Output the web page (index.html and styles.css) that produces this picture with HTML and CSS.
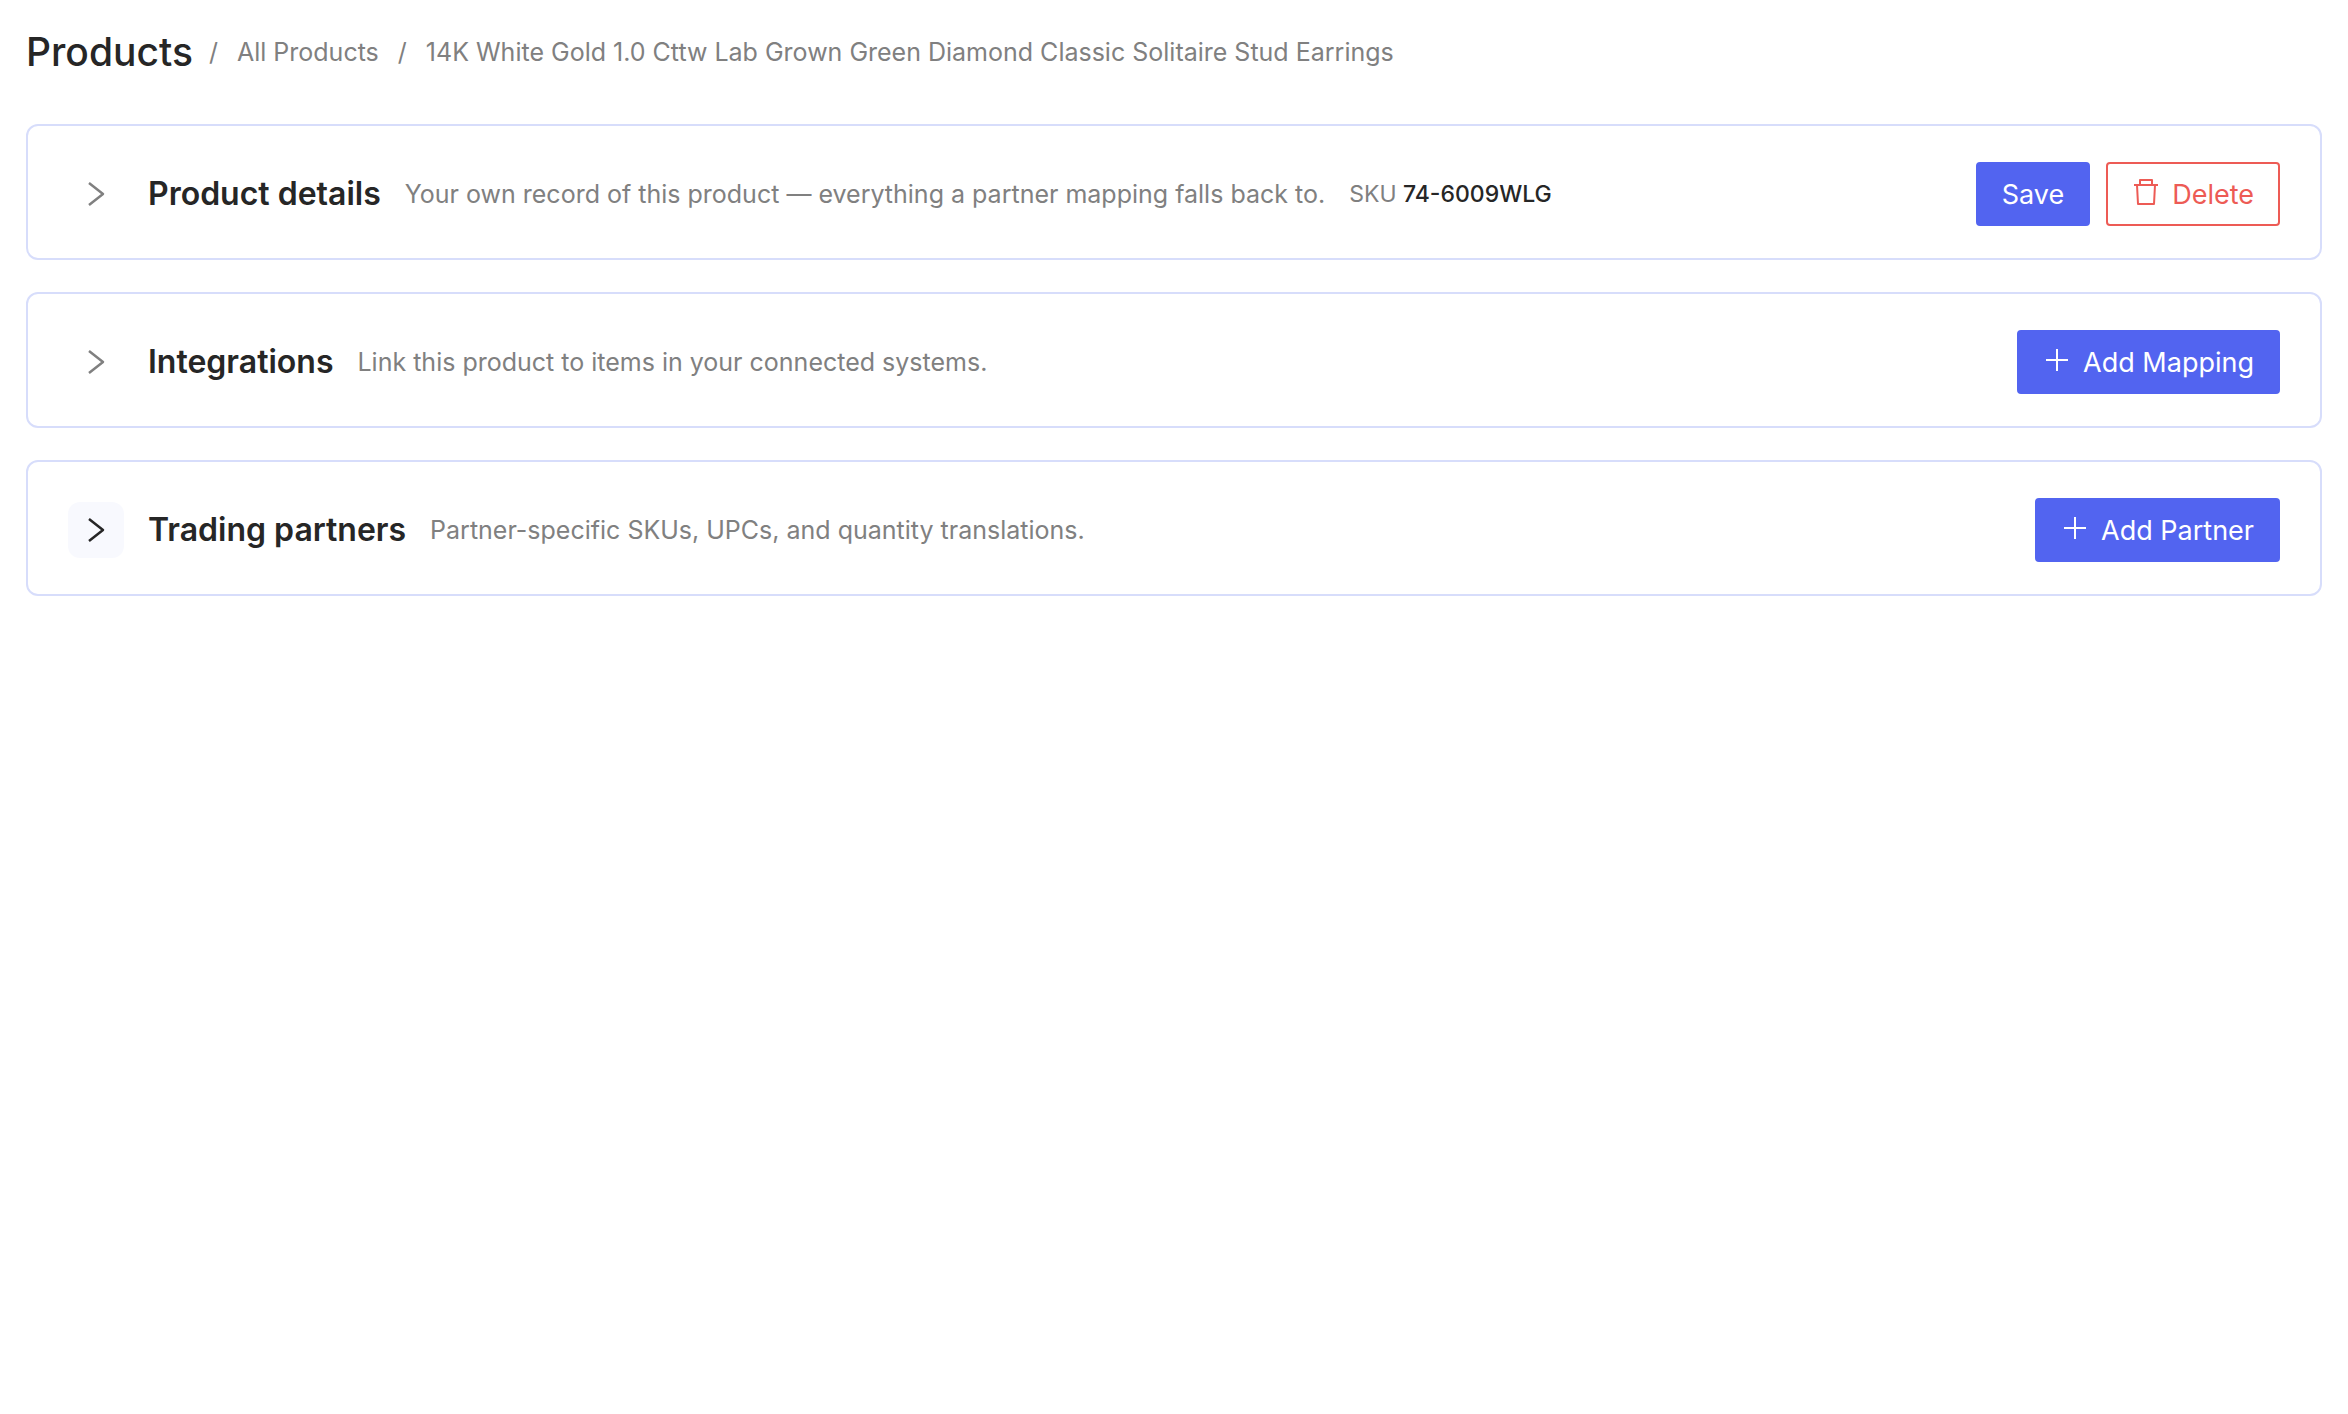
FILE: index.html
```
<!DOCTYPE html>
<html lang="en">
<head>
    <meta charset="UTF-8">
    <meta name="viewport" content="width=device-width, initial-scale=1.0">
    <title>Products</title>
    <link rel="stylesheet" href="styles.css">
</head>
<body>
    <header class="page-header">
        <h1>Products</h1>
        <nav class="breadcrumb" aria-label="Breadcrumb">
            <span class="separator">/</span>
            <a href="#">All Products</a>
            <span class="separator">/</span>
            <span>14K White Gold 1.0 Cttw Lab Grown Green Diamond Classic Solitaire Stud Earrings</span>
        </nav>
    </header>

    <main>
        <section class="card">
            <button type="button" class="toggle" aria-label="Expand product details">
                <svg viewBox="0 0 28 28"><path d="M7 3 L21 14 L7 25"/></svg>
            </button>
            <h2>Product details</h2>
            <p class="description">Your own record of this product — everything a partner mapping falls back to.</p>
            <p class="sku">SKU <strong>74-6009WLG</strong></p>
            <div class="actions">
                <button type="button" class="btn btn-primary">Save</button>
                <button type="button" class="btn btn-danger">
                    <svg viewBox="0 0 28 28"><path d="M2 7 H26 M5 7 L6 26 H22 L23 7 M8 7 V2 H20 V7"/></svg>
                    Delete
                </button>
            </div>
        </section>

        <section class="card">
            <button type="button" class="toggle" aria-label="Expand integrations">
                <svg viewBox="0 0 28 28"><path d="M7 3 L21 14 L7 25"/></svg>
            </button>
            <h2>Integrations</h2>
            <p class="description">Link this product to items in your connected systems.</p>
            <div class="actions">
                <button type="button" class="btn btn-primary">
                    <svg viewBox="0 0 28 28"><path d="M14 3 V25 M3 14 H25"/></svg>
                    Add Mapping
                </button>
            </div>
        </section>

        <section class="card">
            <button type="button" class="toggle active" aria-label="Expand trading partners">
                <svg viewBox="0 0 28 28"><path d="M7 3 L21 14 L7 25"/></svg>
            </button>
            <h2>Trading partners</h2>
            <p class="description">Partner-specific SKUs, UPCs, and quantity translations.</p>
            <div class="actions">
                <button type="button" class="btn btn-primary">
                    <svg viewBox="0 0 28 28"><path d="M14 3 V25 M3 14 H25"/></svg>
                    Add Partner
                </button>
            </div>
        </section>
    </main>
</body>
</html>
```
FILE: styles.css
```
* {
    box-sizing: border-box;
}
body {
    font-family: Inter, "Liberation Sans", sans-serif;
    margin: 0;
    padding: 24px 26px;
    color: #262626;
    background-color: #fff;
}
h1, h2, p {
    margin: 0;
}
.page-header {
    display: flex;
    align-items: center;
    gap: 16px;
    min-height: 56px;
    margin-bottom: 44px;
}
h1 {
    font-size: 39px;
    font-weight: 500;
    line-height: 56px;
}
.breadcrumb {
    display: flex;
    align-items: center;
    gap: 19px;
    font-size: 25px;
    line-height: 40px;
    color: #808080;
}
.breadcrumb a {
    color: inherit;
    text-decoration: none;
}
main {
    display: flex;
    flex-direction: column;
    gap: 32px;
}
.card {
    display: flex;
    align-items: center;
    gap: 24px;
    padding: 36px 40px 32px;
    border: 2px solid #d7ddfb;
    border-radius: 12px;
}
.toggle {
    display: flex;
    align-items: center;
    justify-content: center;
    width: 56px;
    height: 56px;
    padding: 0;
    border: none;
    border-radius: 12px;
    color: #808080;
    background: none;
    cursor: pointer;
}
.toggle.active {
    color: #262626;
    background-color: #f8f9fe;
}
svg {
    flex: none;
    width: 28px;
    height: 28px;
    fill: none;
    stroke: currentColor;
    stroke-width: 2;
    stroke-linejoin: round;
}
.toggle svg {
    stroke-width: 2.5;
}
h2 {
    font-size: 32px;
    font-weight: 600;
    line-height: 48px;
}
.description {
    font-size: 25px;
    line-height: 40px;
    color: #808080;
}
.sku {
    font-size: 23px;
    line-height: 40px;
    color: #808080;
}
.sku strong {
    font-weight: 500;
    color: #262626;
}
.actions {
    display: flex;
    gap: 16px;
    margin-left: auto;
}
.btn {
    display: flex;
    align-items: center;
    gap: 12px;
    height: 64px;
    padding: 0 24px;
    border: 2px solid;
    border-radius: 4px;
    font-family: inherit;
    font-size: 27px;
    white-space: nowrap;
    cursor: pointer;
}
.btn svg {
    margin-bottom: 4px;
}
.btn-primary {
    border-color: #5264f0;
    color: #fff;
    background-color: #5264f0;
}
.btn-danger {
    border-color: #ed5b55;
    color: #ed5b55;
    background-color: #fff;
}
```
